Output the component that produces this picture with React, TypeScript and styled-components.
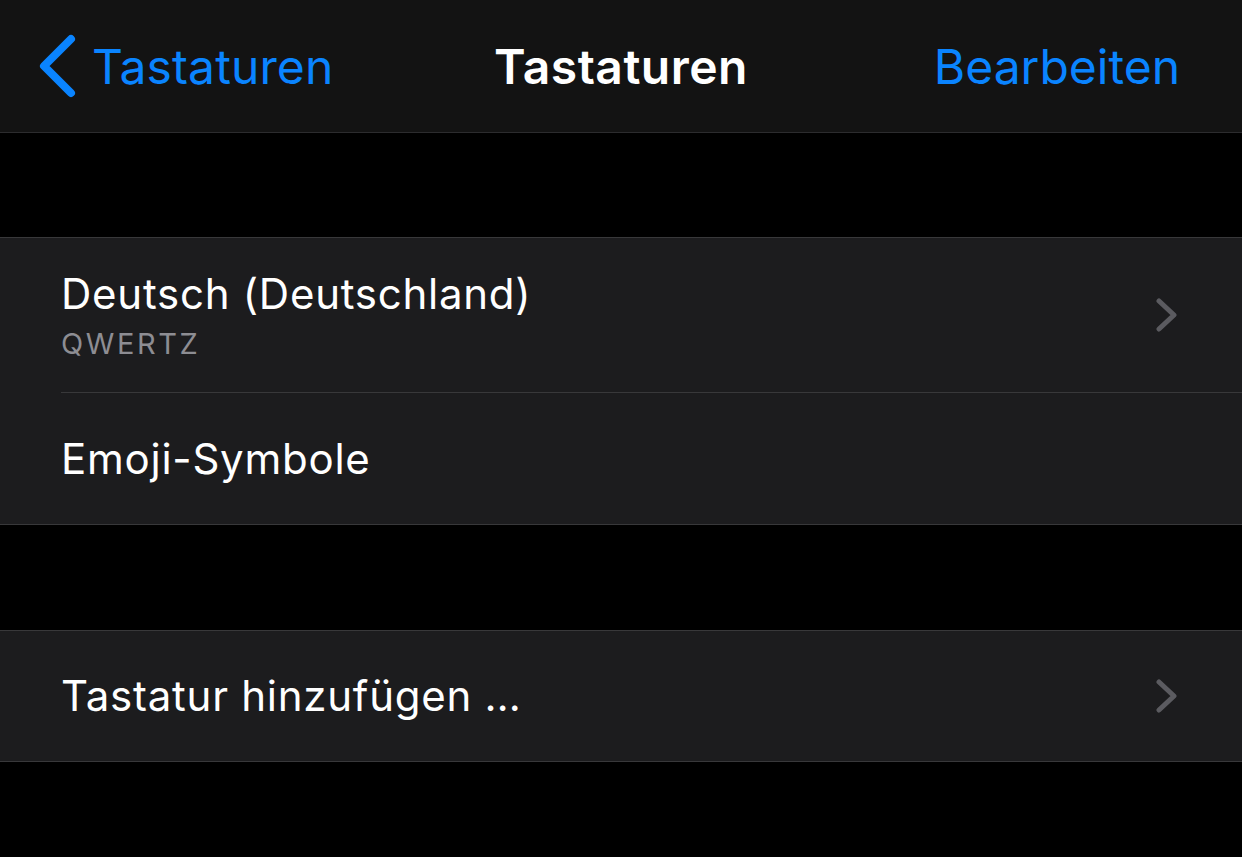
import React from 'react';
import styled, { createGlobalStyle } from 'styled-components';

const GlobalStyle = createGlobalStyle`
    html, body {
        margin: 0;
        padding: 0;
        background: #000;
    }
    body {
        font-family: Inter, "Noto Sans", "Liberation Sans", sans-serif;
        -webkit-font-smoothing: antialiased;
    }
`;

const Screen = styled.div`
    width: 1242px;
    height: 857px;
    background: #000;
    display: flex;
    flex-direction: column;
    overflow: hidden;
`;

const NavBar = styled.header`
    height: 132px;
    background: #131313;
    border-bottom: 1px solid #2c2c2e;
    display: grid;
    grid-template-columns: 1fr auto 1fr;
    align-items: center;
    padding: 0 38px;
    flex-shrink: 0;
`;

const BackButton = styled.div`
    display: flex;
    align-items: center;
    gap: 16px;
    color: #0a84ff;
    font-size: 48px;
    letter-spacing: 0.1px;
`;

const NavTitle = styled.h1`
    margin: 0;
    color: #fff;
    font-size: 48px;
    font-weight: 600;
    letter-spacing: 0.5px;
`;

const EditButton = styled.div`
    justify-self: end;
    margin-right: 24px;
    color: #0a84ff;
    font-size: 48px;
    letter-spacing: 0;
`;

const Gap = styled.div<{ $height: number }>`
    height: ${p => p.$height}px;
    flex-shrink: 0;
`;

const Group = styled.section`
    background: #1c1c1e;
    border-top: 1px solid #38383a;
    border-bottom: 1px solid #38383a;
    flex-shrink: 0;
`;

const Row = styled.div<{ $height: number; $divider?: boolean }>`
    height: ${p => p.$height}px;
    margin-left: 61px;
    padding-right: 64px;
    display: flex;
    align-items: center;
    justify-content: space-between;
    border-bottom: ${p => (p.$divider ? '1px solid #38383a' : 'none')};
`;

const Texts = styled.div`
    display: flex;
    flex-direction: column;
`;

const Label = styled.div`
    color: #fff;
    font-size: 42px;
    letter-spacing: 0.75px;
    line-height: 52px;
`;

const SubLabel = styled.div`
    color: #8d8d93;
    font-size: 29px;
    letter-spacing: 2.6px;
    line-height: 36px;
    margin-top: 6px;
`;

const BackChevron = () => (
    <svg width="38" height="64" viewBox="0 0 38 64">
        <path d="M33 5 L6 32 L33 59" fill="none" stroke="#0a84ff" strokeWidth="8" strokeLinecap="round" strokeLinejoin="round" />
    </svg>
);

const Disclosure = () => (
    <svg width="22" height="34" viewBox="0 0 22 34">
        <path d="M3 3 L18 17 L3 31" fill="none" stroke="#5b5b60" strokeWidth="5" strokeLinecap="round" strokeLinejoin="round" />
    </svg>
);

const App = () => {
    return (
        <Screen>
            <GlobalStyle />
            <NavBar>
                <BackButton>
                    <BackChevron />
                    Tastaturen
                </BackButton>
                <NavTitle>Tastaturen</NavTitle>
                <EditButton>Bearbeiten</EditButton>
            </NavBar>
            <Gap $height={104} />
            <Group>
                <Row $height={154} $divider>
                    <Texts>
                        <Label>Deutsch (Deutschland)</Label>
                        <SubLabel>QWERTZ</SubLabel>
                    </Texts>
                    <Disclosure />
                </Row>
                <Row $height={131}>
                    <Label>Emoji-Symbole</Label>
                </Row>
            </Group>
            <Gap $height={105} />
            <Group>
                <Row $height={130}>
                    <Label>Tastatur hinzufügen …</Label>
                    <Disclosure />
                </Row>
            </Group>
        </Screen>
    );
};

export default App;
